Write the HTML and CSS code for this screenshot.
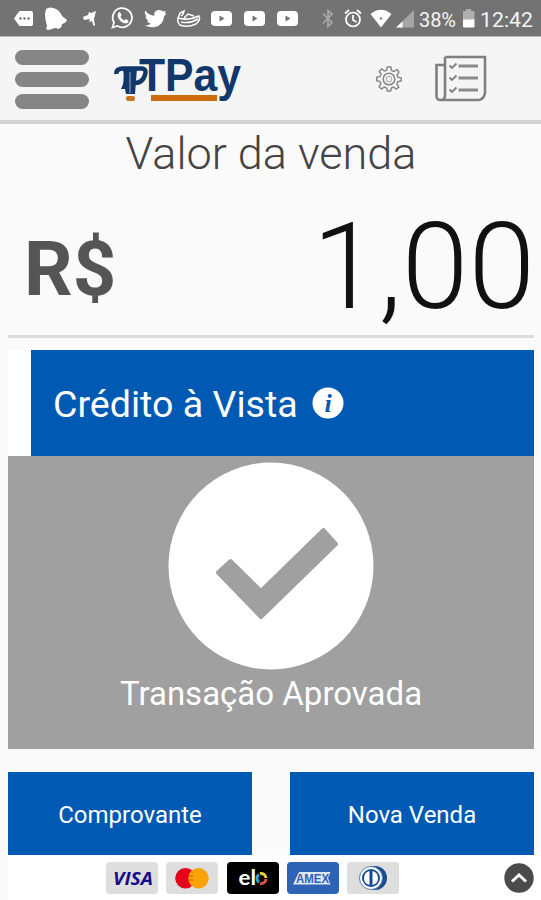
FILE: index.html
```html
<!DOCTYPE html>
<html lang="pt-BR">
<head>
  <meta charset="UTF-8" />
  <meta name="viewport" content="width=device-width, initial-scale=1.0"/>
  <title>TPay</title>
  <link rel="stylesheet" href="styles.css">
</head>
<body>

  <div class="status-bar">
    <svg viewBox="0 0 541 36" width="541" height="36">
      <!-- notifications -->
      <g fill="#fff">
        <path d="M14 18.5 L19 11.5 Q19.500 11 20.500 11 H31 Q33 11 33 13 V24 Q33 26 31 26 H20.500 Q19.500 26 19 25.500 Z"/>
        <path d="M46 9 Q50 6 56 9 Q60 11 62 16 L67 20 Q66 23 62 24 Q62 28 58 29 Q56 27 52 29 L48 30 Q45 29 47 26 Q45 19 45 14 Z"/>
        <path d="M96 11 L91 13 L89 12 L88 15 L83 17 L84 20 L90 19 L89 22 L92 21 L93 25 L95 26 L94 19 Z"/>
        <path d="M145 10.500 Q149 15.500 154.500 15.800 Q153 11 158.500 10 Q161 9.500 163 11.500 L166 10.700 L164.500 13.500 L166.500 13.200 L164 16.500 Q163.500 25 155 27 Q150 28 145 25.500 Q149 25.500 151 23.800 Q147.500 23 147 20.800 H149 Q145.500 19 145.500 16.200 L147 16.500 Q144 14 145 10.500 Z"/>
        <rect x="211" y="11" width="21" height="15" rx="4"/>
        <rect x="244" y="11" width="21" height="15" rx="4"/>
        <rect x="277" y="11" width="21" height="15" rx="4"/>
        <path d="M118.500 12.500 Q120 11 121.500 15 L120.500 17 Q122 19.500 124 20.500 L126 19 Q129 20.500 128.500 22 Q126 25 121 21.500 Q116 17 118.500 12.500 Z"/>
      </g>
      <g fill="#737373">
        <circle cx="20.500" cy="18.500" r="1.200"/><circle cx="24.500" cy="18.500" r="1.200"/><circle cx="28.500" cy="18.500" r="1.200"/>
        <path d="M219.500 15.500 L224.500 18.500 L219.500 21.500 Z"/>
        <path d="M252.500 15.500 L257.500 18.500 L252.500 21.500 Z"/>
        <path d="M285.500 15.500 L290.500 18.500 L285.500 21.500 Z"/>
      </g>
      <g fill="none" stroke="#fff" stroke-width="1.800">
        <path d="M112.500 27.500 L114 22.500 A9.600 9.600 0 1 1 117.500 26 Z"/>
        <path d="M178 18 L180 13 L184 11 L183 14 L181 16 M178 18 Q187 21 199 16 Q201 20 196 24 Q187 28 180 25 Q177 22 178 18 M181 22 Q190 24 198 19 M184 18 L188 14 L194 16" stroke-width="1.500"/>
      </g>

      <!-- system state -->
      <path d="M323 13.500 L332 22.500 L328 26.500 V10.500 L332 14 L323 23.500" fill="none" stroke="#aaa" stroke-width="1.700"/>
      <g fill="none" stroke="#fff" stroke-width="1.700">
        <circle cx="353" cy="19.500" r="7"/>
        <path d="M353 15 V20 L356.500 22 M345 13.500 L349 10 M361 13.500 L357 10"/>
      </g>
      <path d="M370.500 14 Q381 5.500 391.500 14 L381 27.500 Z" fill="#fff"/>
      <circle cx="381" cy="18.500" r="1.300" fill="#888"/>
      <path d="M396 27.500 L414 10 V27.500 Z" fill="#a5a5a5"/>
      <path d="M396 27.500 L402.500 21.500 V27.500 Z" fill="#fff"/>
      <path d="M463 12 Q463 11 464 11 H466 V9 H471 V11 H473.500 Q474.500 11 474.500 12 V20 H463 Z" fill="#b0b0b0"/>
      <path d="M463 19.500 H474.500 V26.500 Q474.500 27.500 473.500 27.500 H464 Q463 27.500 463 26.500 Z" fill="#fff"/>
      <text class="status-text" x="419" y="26.500" textLength="37">38%</text>
      <text class="status-text" x="480" y="26.500" textLength="53" lengthAdjust="spacingAndGlyphs">12:42</text>
    </svg>
  </div>

  <header class="header">
    <div class="menu">
      <span class="menu-bar"></span>
      <span class="menu-bar"></span>
      <span class="menu-bar"></span>
    </div>
    <svg class="logo" viewBox="0 0 128 48" width="128" height="48">
      <!-- cart mark -->
      <path d="M1.500 19 Q1 13.500 8 13.500 H27 Q32 14 30 20 Q27.500 28 20 28" fill="none" stroke="#12386b" stroke-width="4.600"/>
      <path d="M8 13 H22 L20 39 H11 L10 34 H6 Q10 28 8 13 Z" fill="#12386b"/>
      <path d="M15 17 V38" stroke="#7892b3" stroke-width="1.400"/>
      <rect x="11" y="41" width="9" height="5" rx="2" fill="#c9761d"/>
      <rect x="36" y="40" width="66" height="6" fill="#cc6c0b"/>
      <text class="logo-text" x="24" y="35.500" textLength="102" lengthAdjust="spacingAndGlyphs">TPay</text>
    </svg>
    <svg class="gear" viewBox="0 0 28 28" width="28" height="28">
      <g fill="none" stroke="#858585">
        <path d="M12.200 2 H15.800 L16.500 5.500 L19 6.500 L22 4.500 L24 7 L22 10 L22.800 12.200 L26.300 13 V16 L22.800 16.700 L21.800 19 L23.800 22 L21.200 24 L18.500 22 L16.400 23 L15.700 26 H12.300 L11.600 23 L9.200 22 L6.500 24 L4 21.500 L6 18.700 L5 16.500 L1.700 15.800 V12.200 L5.200 11.500 L6.200 9.200 L4.200 6.500 L6.700 4 L9.500 6 L11.600 5.200 Z" stroke-width="1.400"/>
        <circle cx="14" cy="14" r="5.800" stroke-width="1.500"/>
        <circle cx="14" cy="14" r="2.800" stroke="#a5a5a5"/>
      </g>
    </svg>
    <svg class="list" viewBox="0 0 54 48" width="54" height="48">
      <g fill="none" stroke="#808080" stroke-width="2.600">
        <path d="M11 3 H51 V39 Q50 45 45 46 H6 Q2.500 46 2.500 42 V11 H11 M11 3 V41 Q11 46 7 46"/>
        <path d="M24.500 12 H44 M24.500 24 H44 M24.500 36 H44" stroke-width="3.200" stroke="#8a8a8a"/>
        <path d="M15.500 11.500 L18 14 L22.500 9.500 M15.500 23.500 L18 26 L22.500 21.500 M15.500 35.500 L18 38 L22.500 33.500" stroke-width="1.900"/>
      </g>
    </svg>
  </header>

  <main class="content">
    <h1 class="title">Valor da venda</h1>
    <div class="amount">
      <span class="currency">R$</span>
      <span class="value">1,00</span>
    </div>

    <div class="payment">
      <span class="payment-name">Crédito à Vista</span>
      <svg class="info" viewBox="0 0 32 32" width="32" height="32">
        <circle cx="16" cy="16" r="15.500" fill="#fff"/>
        <text class="info-text" x="16" y="25">i</text>
      </svg>
    </div>

    <div class="result">
      <svg viewBox="0 0 206 208" width="206" height="208">
        <ellipse cx="103" cy="104" rx="102.500" ry="103.500" fill="#fff"/>
        <path d="M50 110.500 L62.500 99 L93 129 L155.500 68 L168 82 L93 155 Z" fill="#a0a0a0" stroke="#a0a0a0" stroke-width="4" stroke-linejoin="round"/>
      </svg>
      <p class="result-text">Transação Aprovada</p>
    </div>

    <div class="actions">
      <button class="action">Comprovante</button>
      <button class="action">Nova Venda</button>
    </div>
  </main>

  <footer class="footer">
    <div class="cards">
      <svg viewBox="0 0 52 32" width="52" height="32">
        <rect width="52" height="32" rx="4" fill="#dedede"/>
        <text class="visa" x="7" y="23" textLength="40" lengthAdjust="spacingAndGlyphs">VISA</text>
      </svg>
      <svg viewBox="0 0 52 32" width="52" height="32">
        <rect width="52" height="32" rx="4" fill="#dedede"/>
        <circle cx="19.500" cy="16.300" r="10.300" fill="#e6001b"/>
        <circle cx="32.500" cy="16.300" r="10.300" fill="#faa307"/>
        <path d="M22 14 H27 M22 18 H27" stroke="#d94a10"/>
      </svg>
      <svg viewBox="0 0 52 32" width="52" height="32">
        <rect width="52" height="32" rx="4" fill="#000"/>
        <text class="elo" x="11.500" y="22.500" textLength="17.500" lengthAdjust="spacingAndGlyphs">el</text>
        <g fill="none" stroke-width="3">
          <path d="M32 20.500 A5 5 0 0 1 32 12.500" stroke="#2d9fd8"/>
          <path d="M33 11.500 A5 5 0 0 1 39 16" stroke="#ecd42c"/>
          <path d="M39 17 A5 5 0 0 1 33 21.500" stroke="#df5338"/>
        </g>
      </svg>
      <svg viewBox="0 0 52 32" width="52" height="32">
        <rect width="52" height="32" rx="4" fill="#2e62b5"/>
        <path d="M6 22.500 L12 10 H43.500 L41 16 L43.500 22.500 Z" fill="#dce7f6"/>
        <text class="amex" x="9" y="20.700" textLength="33" lengthAdjust="spacingAndGlyphs">AMEX</text>
      </svg>
      <svg viewBox="0 0 52 32" width="52" height="32">
        <rect width="52" height="32" rx="3" fill="#dedede"/>
        <path d="M24 4 H28 A12 12 0 0 1 28 28 H24 Z" fill="#164b91"/>
        <circle cx="24" cy="16" r="11.500" fill="#fff" stroke="#547eaf"/>
        <circle cx="24" cy="16" r="9" fill="#164b91"/>
        <path d="M22.500 9 A7.200 7.200 0 0 0 22.500 23 Z M25.500 9 A7.200 7.200 0 0 1 25.500 23 Z" fill="#fff"/>
      </svg>
    </div>
    <svg class="to-top" viewBox="0 0 30 30" width="30" height="30">
      <circle cx="15" cy="15" r="14.700" fill="#4b4b4b"/>
      <path d="M8 18.500 L15 12 L22 18.500" fill="none" stroke="#fff" stroke-width="3"/>
    </svg>
  </footer>

</body>
</html>
```

FILE: styles.css
```css
* {
  box-sizing: border-box;
}

html, body {
  margin: 0;
  padding: 0;
  height: 900px;
  overflow: hidden;
  background: #fafafa;
  font-family: Roboto, sans-serif;
}

svg {
  display: block;
  flex-shrink: 0;
}

.status-bar {
  height: 37px;
  background: #737373;
  border-bottom: 1px solid #b8b8b8;
}

.status-text {
  fill: #f4f4f4;
  font-size: 20px;
}

.header {
  height: 87px;
  display: flex;
  align-items: flex-start;
  padding-left: 15px;
  background: #f5f5f5;
  border-bottom: 4px solid #d3d3d3;
}

.menu {
  width: 74px;
  display: flex;
  flex-direction: column;
  gap: 7px;
  padding-top: 13px;
}

.menu-bar {
  height: 15px;
  border-radius: 8px;
  background: #858585;
}

.logo {
  margin: 18px 0 0 26px;
  overflow: visible;
}

.logo-text {
  fill: #12386b;
  font: bold 46px "Liberation Sans", sans-serif;
}

.gear {
  margin: 28px 0 0 132px;
}

.list {
  margin: 17px 0 0 31px;
}

.content {
  width: 526px;
  margin-left: 8px;
}

.title {
  height: 60px;
  margin: 0;
  color: #444;
  font-size: 45px;
  font-weight: 300;
  line-height: 60px;
  text-align: center;
}

.amount {
  height: 154px;
  display: flex;
  justify-content: space-between;
  align-items: flex-start;
  padding: 13px 0 0 16px;
  border-bottom: 3px solid #dcdcdc;
}

.currency {
  color: #555;
  font-size: 76px;
  font-weight: 700;
  line-height: 144px;
}

.value {
  margin-right: -1px;
  color: #111;
  font-size: 120px;
  font-weight: 300;
  line-height: 140px;
}

.payment {
  height: 106px;
  display: flex;
  align-items: center;
  gap: 14px;
  margin-top: 12px;
  padding-left: 22px;
  border-left: 23px solid #fff;
  background: #0059b3;
  color: #fff;
}

.payment-name {
  padding-top: 1px;
  font-size: 37.600px;
}

.info-text {
  fill: #0059b3;
  font: italic bold 26px "Liberation Serif", serif;
  text-anchor: middle;
}

.result {
  height: 293px;
  display: flex;
  flex-direction: column;
  align-items: center;
  padding-top: 6px;
  background: #a0a0a0;
}

.result-text {
  margin: 4px 0 0;
  color: #fff;
  font-size: 33px;
  line-height: 40px;
}

.actions {
  display: grid;
  grid-template-columns: 1fr 1fr;
  gap: 38px;
  margin-top: 23px;
}

.action {
  height: 83px;
  padding: 2px 0 0;
  border: 0;
  background: #0059b3;
  color: #fff;
  font-family: inherit;
  font-size: 24px;
}

.footer {
  height: 45px;
  display: flex;
  align-items: flex-start;
  justify-content: space-between;
  margin-left: 8px;
  padding: 7px 7px 0 98px;
  background: #fff;
}

.cards {
  display: flex;
  gap: 8.300px;
}

.visa {
  fill: #170b8c;
  font: italic bold 18px "Open Sans", sans-serif;
}

.elo {
  fill: #fff;
  font: bold 20px Lato, sans-serif;
}

.amex {
  fill: #2e62b5;
  font: bold 13px "Liberation Sans", sans-serif;
}

.to-top {
  margin-top: 1px;
}
```
